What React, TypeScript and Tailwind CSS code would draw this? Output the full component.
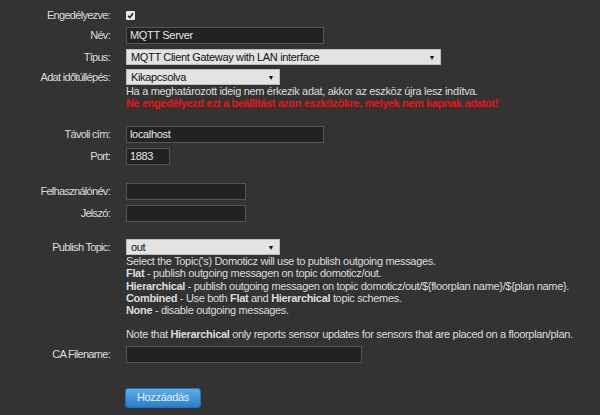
import type { ReactNode } from 'react';

const font = { fontFamily: '"Liberation Sans", Arial, sans-serif' };

function Row({ label, children, className = '' }: { label: string; children: ReactNode; className?: string }) {
  return (
    <div className={`flex ${className}`}>
      <div className="w-[110px] shrink-0 text-right text-[#dddddd] leading-[17px] tracking-[-0.7px]">{label}</div>
      <div className="ml-[16px] flex-1 whitespace-nowrap">{children}</div>
    </div>
  );
}

function TextInput({ value = '', width }: { value?: string; width: string }) {
  return (
    <div className={`${width} h-[17px] border border-[#555555] bg-[#222222] px-[3px] text-[#e6e6e6] leading-[15px]`}>
      {value}
    </div>
  );
}

function Select({ value, width }: { value: string; width: string }) {
  return (
    <div className={`${width} h-[16px] flex items-center justify-between bg-[#e3e3e3] border border-[#bbbbbb] pl-[4px] pr-[5px] text-[#111111]`}>
      <span>{value}</span>
      <span className="text-[7px] leading-none">▼</span>
    </div>
  );
}

export default function App() {
  return (
    <div style={font} className="w-[600px] h-[415px] overflow-hidden bg-[#333333] text-[11px] tracking-[-0.33px] text-[#dddddd] pt-[7px]">
      <Row label="Engedélyezve:">
        <div className="h-[17px] flex items-center">
          <div className="w-[9px] h-[9px] bg-[#e8e8e8] rounded-[1px] flex items-center justify-center">
            <svg width="7" height="7" viewBox="0 0 7 7">
              <path d="M1 3.8 L2.8 5.6 L6 1.2" stroke="#222" strokeWidth="1.5" fill="none" />
            </svg>
          </div>
        </div>
      </Row>
      <Row label="Név:" className="mt-[3px]">
        <TextInput value="MQTT Server" width="w-[198px]" />
      </Row>
      <Row label="Típus:" className="mt-[5px]">
        <Select value="MQTT Client Gateway with LAN interface" width="w-[315px]" />
      </Row>
      <Row label="Adat időtúllépés:" className="mt-[3px]">
        <Select value="Kikapcsolva" width="w-[154px]" />
        <div className="leading-[12px]">Ha a meghatározott ideig nem érkezik adat, akkor az eszköz újra lesz indítva.</div>
        <div className="leading-[12px] font-bold text-[#ee1111] tracking-[-0.4px]">
          Ne engedélyezd ezt a beállítást azon eszközökre, melyek nem kapnak adatot!
        </div>
      </Row>
      <Row label="Távoli cím:" className="mt-[17px]">
        <TextInput value="localhost" width="w-[198px]" />
      </Row>
      <Row label="Port:" className="mt-[5px]">
        <TextInput value="1883" width="w-[44px]" />
      </Row>
      <Row label="Felhasználónév:" className="mt-[18px]">
        <TextInput width="w-[120px]" />
      </Row>
      <Row label="Jelszó:" className="mt-[5px]">
        <TextInput width="w-[120px]" />
      </Row>
      <Row label="Publish Topic:" className="mt-[17px]">
        <Select value="out" width="w-[154px]" />
        <div className="leading-[12.3px]">
          <div>Select the Topic('s) Domoticz will use to publish outgoing messages.</div>
          <div><b>Flat</b> - publish outgoing messagen on topic domoticz/out.</div>
          <div>
            <b>Hierarchical</b> - publish outgoing messagen on topic domoticz/out/${'{'}floorplan name{'}'}/${'{'}plan name{'}'}.
          </div>
          <div>
            <b>Combined</b> - Use both <b>Flat</b> and <b>Hierarchical</b> topic schemes.
          </div>
          <div><b>None</b> - disable outgoing messages.</div>
          <div className="mt-[12px]">
            Note that <b>Hierarchical</b> only reports sensor updates for sensors that are placed on a floorplan/plan.
          </div>
        </div>
      </Row>
      <Row label="CA Filename:" className="mt-[5px]">
        <TextInput width="w-[236px]" />
      </Row>
      <div className="pl-[125px] mt-[25px]">
        <button className="w-[76px] h-[20px] rounded-[3px] bg-gradient-to-b from-[#5aaeea] to-[#2b7dcc] border border-[#2a6fb5] text-[#e8f2fb] text-[11px] leading-none">
          Hozzáadás
        </button>
      </div>
    </div>
  );
}
